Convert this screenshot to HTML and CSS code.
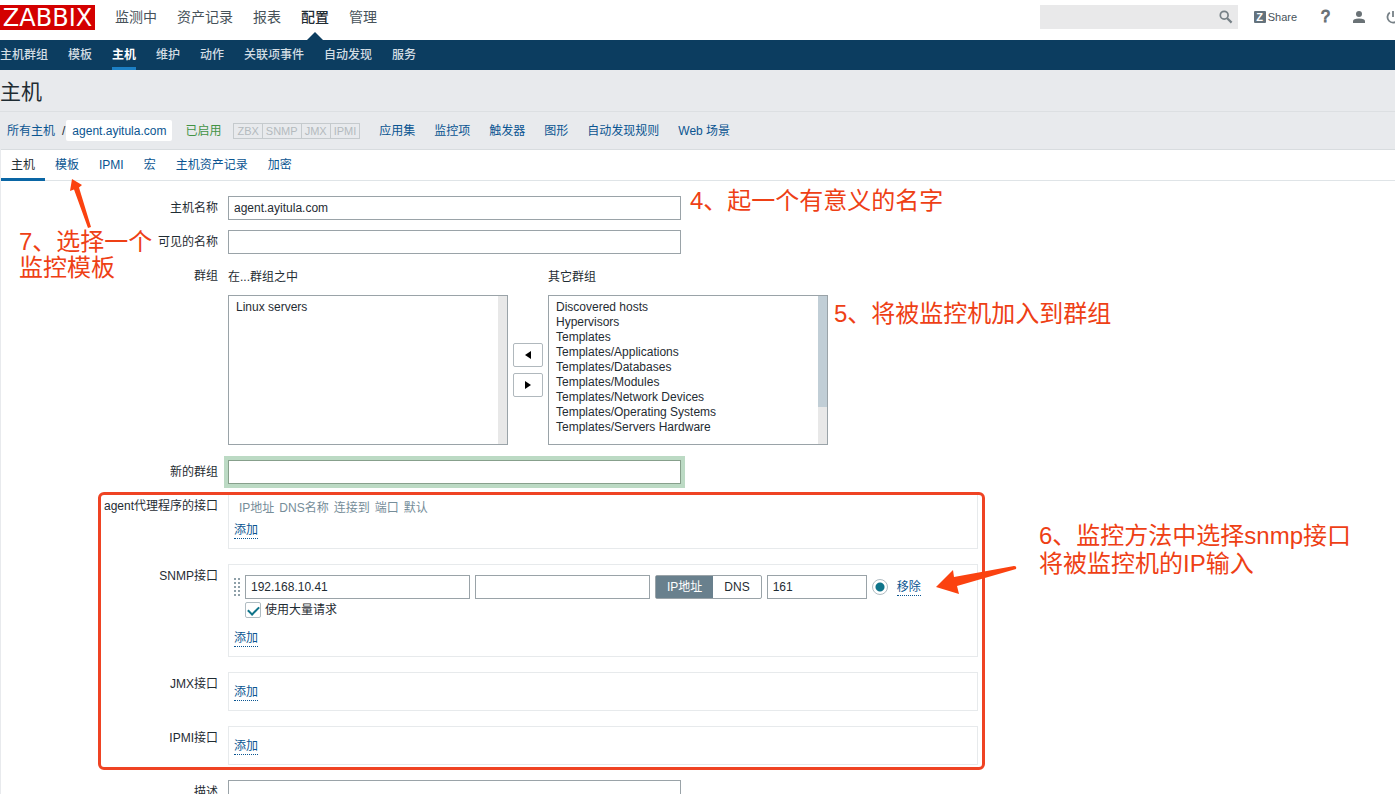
FILE: index.html
```html
<!DOCTYPE html>
<html lang="zh-CN">
<head>
<meta charset="utf-8">
<title>主机</title>
<link rel="stylesheet" href="styles.css">
</head>
<body>
<div class="page">
  <header class="top">
    <a class="logo" href="#">ZABBIX</a>
    <nav class="main-nav">
      <a href="#">监测中</a>
      <a href="#">资产记录</a>
      <a href="#">报表</a>
      <a class="active" href="#">配置</a>
      <a href="#">管理</a>
    </nav>
    <div class="tools">
      <form class="search">
        <input type="text" aria-label="搜索">
        <button type="button" aria-label="搜索">
          <svg width="14" height="14" viewBox="0 0 14 14" fill="none" stroke="#768086"><circle cx="5.2" cy="5.2" r="3.9" stroke-width="1.7"/><path d="M8.2 8.2L12.6 12.6" stroke-width="2.2"/></svg>
        </button>
      </form>
      <a class="share" href="#"><span class="share-z">Z</span>Share</a>
      <a class="tool help" href="#">?</a>
      <a class="tool" href="#" aria-label="用户"><svg width="14" height="14" viewBox="0 0 14 14" fill="#6a7276"><circle cx="7" cy="4" r="3"/><path d="M1 13V11.200Q1 8.400 7 8.400T13 11.200V13Z"/></svg></a>
      <a class="tool" href="#" aria-label="退出"><svg width="14" height="14" viewBox="0 0 14 14" fill="none" stroke="#768086" stroke-width="1.800"><path d="M3.800 2.600A5.500 5.500 0 1 0 10.200 2.600M7 1V7"/></svg></a>
    </div>
  </header>
  <nav class="sub-nav">
    <a href="#">主机群组</a>
    <a href="#">模板</a>
    <a class="active" href="#">主机</a>
    <a href="#">维护</a>
    <a href="#">动作</a>
    <a href="#">关联项事件</a>
    <a href="#">自动发现</a>
    <a href="#">服务</a>
  </nav>
  <h1>主机</h1>
  <div class="crumbs">
    <span class="path"><a href="#">所有主机</a><span>/</span><a class="current" href="#">agent.ayitula.com</a></span>
    <span class="enabled">已启用</span>
    <span class="badges"><span>ZBX</span><span>SNMP</span><span>JMX</span><span>IPMI</span></span>
    <a href="#">应用集</a>
    <a href="#">监控项</a>
    <a href="#">触发器</a>
    <a href="#">图形</a>
    <a href="#">自动发现规则</a>
    <a href="#">Web 场景</a>
  </div>
  <main class="sheet">
    <nav class="tabs">
      <a class="active" href="#">主机</a>
      <a href="#">模板</a>
      <a href="#">IPMI</a>
      <a href="#">宏</a>
      <a href="#">主机资产记录</a>
      <a href="#">加密</a>
    </nav>
    <form class="host-form">
      <label for="host">主机名称</label>
      <input class="wide" id="host" type="text" value="agent.ayitula.com">

      <label for="visible">可见的名称</label>
      <input class="wide" id="visible" type="text">

      <span class="label">群组</span>
      <div class="groups">
        <div class="group">
          <label for="in-groups">在...群组之中</label>
          <div class="listbox">
            <select id="in-groups" multiple>
              <option>Linux servers</option>
            </select>
            <div class="track"></div>
          </div>
        </div>
        <div class="move">
          <button type="button" aria-label="加入"><svg width="6" height="8" viewBox="0 0 6 8"><path d="M6 0V8L0 4Z"/></svg></button>
          <button type="button" aria-label="移出"><svg width="6" height="8" viewBox="0 0 6 8"><path d="M0 0V8L6 4Z"/></svg></button>
        </div>
        <div class="group">
          <label for="other-groups">其它群组</label>
          <div class="listbox">
            <select id="other-groups" multiple>
              <option>Discovered hosts</option>
              <option>Hypervisors</option>
              <option>Templates</option>
              <option>Templates/Applications</option>
              <option>Templates/Databases</option>
              <option>Templates/Modules</option>
              <option>Templates/Network Devices</option>
              <option>Templates/Operating Systems</option>
              <option>Templates/Servers Hardware</option>
            </select>
            <div class="track"><div class="thumb"></div></div>
          </div>
        </div>
      </div>

      <label class="spaced" for="new-group">新的群组</label>
      <input class="wide focused spaced" id="new-group" type="text">

      <span class="label">agent代理程序的接口</span>
      <div class="panel">
        <table class="columns">
          <tr><th>IP地址</th><th>DNS名称</th><th>连接到</th><th>端口</th><th>默认</th></tr>
        </table>
        <a class="action" href="#">添加</a>
      </div>

      <span class="label spaced">SNMP接口</span>
      <div class="panel snmp spaced">
        <div class="interface">
          <svg class="grip" width="6" height="18" viewBox="0 0 6 18" fill="#8fa0a9"><path d="M0 0h2v2H0zM4 0h2v2H4zM0 4h2v2H0zM4 4h2v2H4zM0 8h2v2H0zM4 8h2v2H4zM0 12h2v2H0zM4 12h2v2H4zM0 16h2v2H0zM4 16h2v2H4z"/></svg>
          <input class="ip" type="text" value="192.168.10.41" aria-label="IP地址">
          <input class="dns" type="text" aria-label="DNS名称">
          <div class="segmented">
            <input type="radio" name="via" id="via-ip" checked><label for="via-ip">IP地址</label><input type="radio" name="via" id="via-dns"><label for="via-dns">DNS</label>
          </div>
          <input class="port" type="text" value="161" aria-label="端口">
          <input class="default" type="radio" name="default" checked aria-label="默认">
          <a class="action" href="#">移除</a>
        </div>
        <div class="bulk">
          <input type="checkbox" id="bulk" checked><label for="bulk">使用大量请求</label>
        </div>
        <a class="action" href="#">添加</a>
      </div>

      <span class="label spaced">JMX接口</span>
      <div class="panel short spaced"><a class="action" href="#">添加</a></div>

      <span class="label spaced">IPMI接口</span>
      <div class="panel short spaced"><a class="action" href="#">添加</a></div>

      <label class="spaced" for="description">描述</label>
      <textarea class="wide spaced" id="description"></textarea>
    </form>
  </main>

  <div class="frame"></div>
  <p class="note note-name">4、起一个有意义的名字</p>
  <p class="note note-group">5、将被监控机加入到群组</p>
  <p class="note note-snmp">6、监控方法中选择snmp接口<br>将被监控机的IP输入</p>
  <p class="note note-template">7、选择一个<br>监控模板</p>
  <svg class="arrow arrow-template" width="24" height="52" viewBox="0 0 24 52"><path d="M4 1L14 7L11 9.500L23 49L20 50L6 11.500L2 13Z"/></svg>
  <svg class="arrow arrow-snmp" width="84" height="32" viewBox="0 0 84 32"><path d="M1 22L18 5L19 12L79 1Q82 1 81 4L22 21L24 29Z"/></svg>
</div>
</body>
</html>
```
FILE: styles.css
```css
* { box-sizing: border-box; }

body {
  margin: 0;
  background: #fff;
  color: #1f2c33;
  font: 12px/16px "Liberation Sans", "Noto Sans CJK SC", sans-serif;
}

a { color: #0a5591; text-decoration: none; }
input, select, textarea, button { margin: 0; font: inherit; color: inherit; }

.page { position: relative; height: 100vh; overflow: hidden; background: #e8eaed; }

/* Top bar */
.top { display: flex; align-items: flex-start; height: 40px; padding-top: 5px; background: #fff; }
.logo {
  width: 95px; height: 25px; margin-right: 20px;
  background: #d40000; color: #fff;
  font: 24px/26px "DejaVu Sans", sans-serif; text-align: center;
}
.main-nav { display: flex; gap: 20px; height: 35px; font-size: 14px; line-height: 24px; }
.main-nav a { color: #47525a; white-space: nowrap; }
.main-nav .active { position: relative; color: #1f2c33; font-weight: 500; }
.main-nav .active::after {
  content: ""; position: absolute; bottom: 0; left: 50%; margin-left: -8px;
  border: 8px solid transparent; border-top: 0; border-bottom: 8px solid #0c3d60;
}
.tools { display: flex; align-items: center; height: 24px; margin-left: auto; margin-right: -5px; }
.search { display: flex; width: 198px; height: 24px; margin-right: 16px; background: #e9e9ea; }
.search input { flex: 1; min-width: 0; border: 0; background: none; }
.search button { display: flex; align-items: center; padding: 0 5px; border: 0; background: none; }
.share { display: flex; align-items: center; gap: 2px; margin-right: 24px; color: #47525a; font-size: 11px; }
.share-z { width: 12px; height: 12px; border-radius: 1px; background: #64727c; color: #fff; font-weight: 700; line-height: 12px; text-align: center; }
.tool { display: flex; margin-right: 20px; }
.tool:last-child { margin-right: 0; }
.help { color: #6a7276; font: 16px/24px "Liberation Sans", sans-serif; -webkit-text-stroke: 1px #6a7276; margin-right: 22px; }

/* Section bar */
.sub-nav { display: flex; gap: 20px; height: 30px; background: #0c3d60; line-height: 30px; font-weight: 500; }
.sub-nav a { color: #d3dde4; white-space: nowrap; }
.sub-nav .active { border-bottom: 3px solid #1c7fc4; color: #fff; font-weight: 700; }

h1 { margin: 0; height: 42px; border-bottom: 1px solid #dcdfe2; font-size: 21px; line-height: 44px; font-weight: 400; }

.crumbs { display: flex; align-items: center; gap: 19px; height: 37px; padding-left: 7px; white-space: nowrap; }
.path { display: flex; align-items: center; gap: 7px; margin-right: -6px; }
.path .current { margin-left: -6px; padding: 3px 6px 2px; border-radius: 2px; background: #fff; }
.enabled { color: #429345; margin-right: -7px; }
.badges { display: flex; }
.badges span { border: 1px solid #c5cacd; color: #b4babe; padding: 0 3px; font-size: 11px; line-height: 14px; }
.badges span + span { border-left: 0; }

/* Sheet and tabs */
.sheet { height: 100%; margin-left: 1px; border-top: 1px solid #d8dcdf; background: #fff; }
.tabs { display: flex; height: 31px; border-bottom: 1px solid #dfe4e7; line-height: 30px; }
.tabs a { height: 31px; padding: 0 10px; }
.tabs .active { border-bottom: 3px solid #0a66a5; color: #1f2c33; }

/* Form */
.host-form {
  display: grid; grid-template-columns: 217px minmax(0, 750px);
  column-gap: 10px; row-gap: 10px; padding-top: 15px; align-items: start;
}
.host-form > label, .label { text-align: right; padding-top: 4px; white-space: nowrap; }
.spaced { margin-top: 5px; }

input[type="text"], textarea { height: 24px; padding: 0 5px; border: 1px solid #9aa3a8; border-radius: 0; background: #fff; outline: 0; }
.search input[type="text"] { border: 0; background: none; }
.wide { width: 453px; max-width: 100%; }
textarea.wide { height: 80px; resize: none; }
input.focused { border-color: #87a08c; box-shadow: 0 0 0 4px #bcdac4; }

.groups { display: flex; gap: 5px; padding-top: 5px; }
.group { display: flex; flex-direction: column; gap: 10px; }
.listbox { display: flex; width: 280px; height: 150px; border: 1px solid #9aa3a8; }
select { flex: 1; min-width: 0; height: 148px; padding: 4px 5px; border: 0; border-radius: 0; background: #fff; overflow: hidden; outline: 0; }
option { min-height: 15px; padding: 0 2px; line-height: 15px; }
.track { width: 9px; background: #e8e8e8; }
.thumb { height: 75%; background: #c1ced6; }
.move { display: flex; flex-direction: column; gap: 6px; padding-top: 74px; }
.move button { display: flex; align-items: center; justify-content: center; width: 30px; height: 24px; padding: 0; border: 1px solid #b0b8bd; border-radius: 2px; background: #fff; }

.panel { padding: 5px; border: 1px solid #e7eaec; min-height: 55px; }
.columns { border-spacing: 0; margin: 0 0 6px 5px; color: #768d99; }
.columns th { padding: 0 5px 0 0; font-weight: 400; white-space: nowrap; }
.action { display: inline-block; border-bottom: 1px dotted #0a5591; line-height: 16px; }
.short { min-height: 39px; padding-top: 11px; }
.snmp { min-height: 93px; padding-top: 10px; }
.interface { display: flex; align-items: center; gap: 5px; margin-bottom: 3px; }
.ip { width: 225px; }
.dns { width: 175px; }
.port { width: 100px; }
.interface .action { margin-left: 4px; }
.segmented { display: flex; height: 24px; border: 1px solid #9aa3a8; border-radius: 2px; line-height: 22px; }
.segmented input { position: absolute; opacity: 0; }
.segmented label { padding: 0 11px; }
.segmented input:checked + label { background: #69808d; color: #fff; }
.default, .bulk input { appearance: none; width: 16px; height: 16px; border: 1px solid #b0bcc2; background: #fff; }
.default { border-radius: 50%; background: radial-gradient(circle, #0f748a 4px, #fff 5px); }
.bulk { display: flex; align-items: center; gap: 4px; padding-left: 11px; margin-bottom: 12px; }
.bulk input { display: grid; place-items: center; border-radius: 2px; }
.bulk input::after { content: ""; width: 9px; height: 5px; border: solid #0f748a; border-width: 0 0 2px 2px; transform: translateY(-1px) rotate(-45deg); }

/* Notes drawn over the page */
.frame { position: absolute; left: 98px; top: 492px; width: 887px; height: 278px; border: 3px solid #ef4323; border-radius: 6px; pointer-events: none; }
.note { position: absolute; margin: 0; color: #ee4015; font-size: 24px; line-height: 28px; white-space: nowrap; }
.note-name { left: 690px; top: 187px; }
.note-group { left: 834px; top: 300px; }
.note-snmp { left: 1039px; top: 522px; }
.note-template { left: 19px; top: 229px; line-height: 26px; }
.arrow { position: absolute; fill: #fb4210; }
.arrow-template { left: 68px; top: 178px; }
.arrow-snmp { left: 935px; top: 565px; }
```
